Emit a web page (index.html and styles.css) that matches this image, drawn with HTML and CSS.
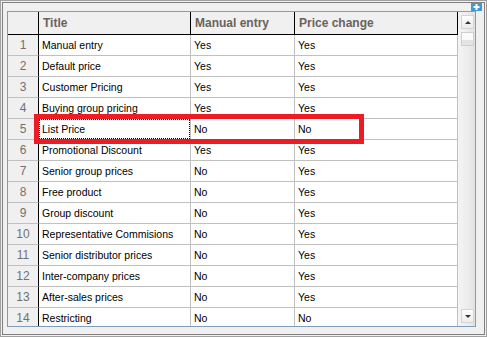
FILE: index.html
```html
<!DOCTYPE html>
<html lang="en">
<head>
    <meta charset="UTF-8">
    <title>Price types</title>
    <link rel="stylesheet" href="styles.css">
</head>
<body>
    <div class="frame">
        <div class="panel">
            <div class="toolbar">
                <span class="add-btn">
                    <svg width="11" height="8" viewBox="0 0 11 8">
                        <rect width="11" height="8" fill="#3d9ad6"/>
                        <path d="M5.5 1v6M2.5 4h6" stroke="#fff" stroke-width="2"/>
                    </svg>
                </span>
            </div>

            <div class="grid-box">
                <div class="grid">
                    <div class="row head">
                        <div class="cell num"></div>
                        <div class="cell">Title</div>
                        <div class="cell">Manual entry</div>
                        <div class="cell">Price change</div>
                    </div>
                    <div class="row"><div class="cell num">1</div><div class="cell">Manual entry</div><div class="cell">Yes</div><div class="cell">Yes</div></div>
                    <div class="row"><div class="cell num">2</div><div class="cell">Default price</div><div class="cell">Yes</div><div class="cell">Yes</div></div>
                    <div class="row"><div class="cell num">3</div><div class="cell">Customer Pricing</div><div class="cell">Yes</div><div class="cell">Yes</div></div>
                    <div class="row"><div class="cell num">4</div><div class="cell">Buying group pricing</div><div class="cell">Yes</div><div class="cell">Yes</div></div>
                    <div class="row"><div class="cell num">5</div><div class="cell focus">List Price</div><div class="cell">No</div><div class="cell">No</div></div>
                    <div class="row"><div class="cell num">6</div><div class="cell">Promotional Discount</div><div class="cell">Yes</div><div class="cell">Yes</div></div>
                    <div class="row"><div class="cell num">7</div><div class="cell">Senior group prices</div><div class="cell">No</div><div class="cell">Yes</div></div>
                    <div class="row"><div class="cell num">8</div><div class="cell">Free product</div><div class="cell">No</div><div class="cell">Yes</div></div>
                    <div class="row"><div class="cell num">9</div><div class="cell">Group discount</div><div class="cell">No</div><div class="cell">Yes</div></div>
                    <div class="row"><div class="cell num">10</div><div class="cell">Representative Commisions</div><div class="cell">No</div><div class="cell">Yes</div></div>
                    <div class="row"><div class="cell num">11</div><div class="cell">Senior distributor prices</div><div class="cell">No</div><div class="cell">Yes</div></div>
                    <div class="row"><div class="cell num">12</div><div class="cell">Inter-company prices</div><div class="cell">No</div><div class="cell">Yes</div></div>
                    <div class="row"><div class="cell num">13</div><div class="cell">After-sales prices</div><div class="cell">No</div><div class="cell">Yes</div></div>
                    <div class="row"><div class="cell num">14</div><div class="cell">Restricting</div><div class="cell">No</div><div class="cell">No</div></div>
                </div>

                <div class="vscroll">
                    <div class="sb-btn"><span class="arrow up"></span></div>
                    <div class="sb-thumb"></div>
                    <div class="sb-track"></div>
                    <div class="sb-btn"><span class="arrow down"></span></div>
                </div>

                <!-- highlight around the List Price row -->
                <div class="mark"></div>
            </div>
        </div>
    </div>
</body>
</html>
```

FILE: styles.css
```css
body {
    margin: 0;
    font-family: "Liberation Sans", Arial, sans-serif;
    font-size: 10.5px;
    color: #000;
    background: #f0f0f0;
}
.frame {
    width: 487px;
    height: 337px;
    box-sizing: border-box;
    border: 1px solid #a0a0a0;
    padding: 1px;
    background: #f0f0f0;
}
.panel {
    height: 100%;
    box-sizing: border-box;
    border: 1px solid #808080;
    padding: 0 8px 7px 4px;
    display: flex;
    flex-direction: column;
}
.toolbar {
    height: 8px;
    display: flex;
    justify-content: flex-end;
    margin-right: -6px;
}
.add-btn {
    display: flex;
}
.grid-box {
    flex: 1;
    min-height: 0;
    display: flex;
    position: relative;
    overflow: hidden;
    border: 1px solid #7f9db9;
    background: #fff;
}
.grid {
    width: 450px;
}
.row {
    display: grid;
    grid-template-columns: 31px 152px 104px 163px;
    height: 21px;
}
.cell {
    box-sizing: border-box;
    position: relative;
    padding-left: 3px;
    line-height: 20px;
    white-space: nowrap;
    overflow: hidden;
    border-right: 1px solid #c0c0c0;
    border-bottom: 1px solid #c0c0c0;
}
.cell.num {
    padding: 0;
    text-align: center;
    font-size: 12px;
    color: #707070;
    background: #f0f0f0;
    border-right-color: #000;
}
.head {
    height: 23px;
}
.head .cell {
    padding-left: 4px;
    line-height: 22px;
    font-size: 12px;
    font-weight: bold;
    color: #6b625c;
    background: #f0f0f0;
    border-right-color: #000;
    border-bottom-color: #000;
}
.cell.focus::after {
    content: "";
    position: absolute;
    inset: 0;
    border: 1px dotted #000;
}

/* vertical scrollbar */
.vscroll {
    width: 17px;
    display: flex;
    flex-direction: column;
    padding: 3px 1px 3px 3px;
    box-sizing: border-box;
    background: linear-gradient(to right, #f4f4f4, #ececec 60%, #e2e2e2);
}
.sb-btn {
    height: 14px;
    box-sizing: border-box;
    border: 1px solid #d4d4d4;
    background: linear-gradient(#fdfdfd, #ececec);
    display: flex;
    align-items: center;
    justify-content: center;
}
.arrow {
    width: 0;
    height: 0;
    border-left: 3px solid transparent;
    border-right: 3px solid transparent;
}
.arrow.up {
    border-bottom: 3px solid #333;
}
.arrow.down {
    border-top: 3px solid #333;
}
.sb-thumb {
    height: 14px;
    margin-top: 3px;
    box-sizing: border-box;
    border: 1px solid #cfcfcf;
    background: linear-gradient(#fbfbfb 55%, #e4e4e4 55%);
}
.sb-track {
    flex: 1;
}

.mark {
    position: absolute;
    left: 26px;
    top: 102px;
    width: 330px;
    height: 30px;
    box-sizing: border-box;
    border: 5px solid #ed1c24;
}
```
